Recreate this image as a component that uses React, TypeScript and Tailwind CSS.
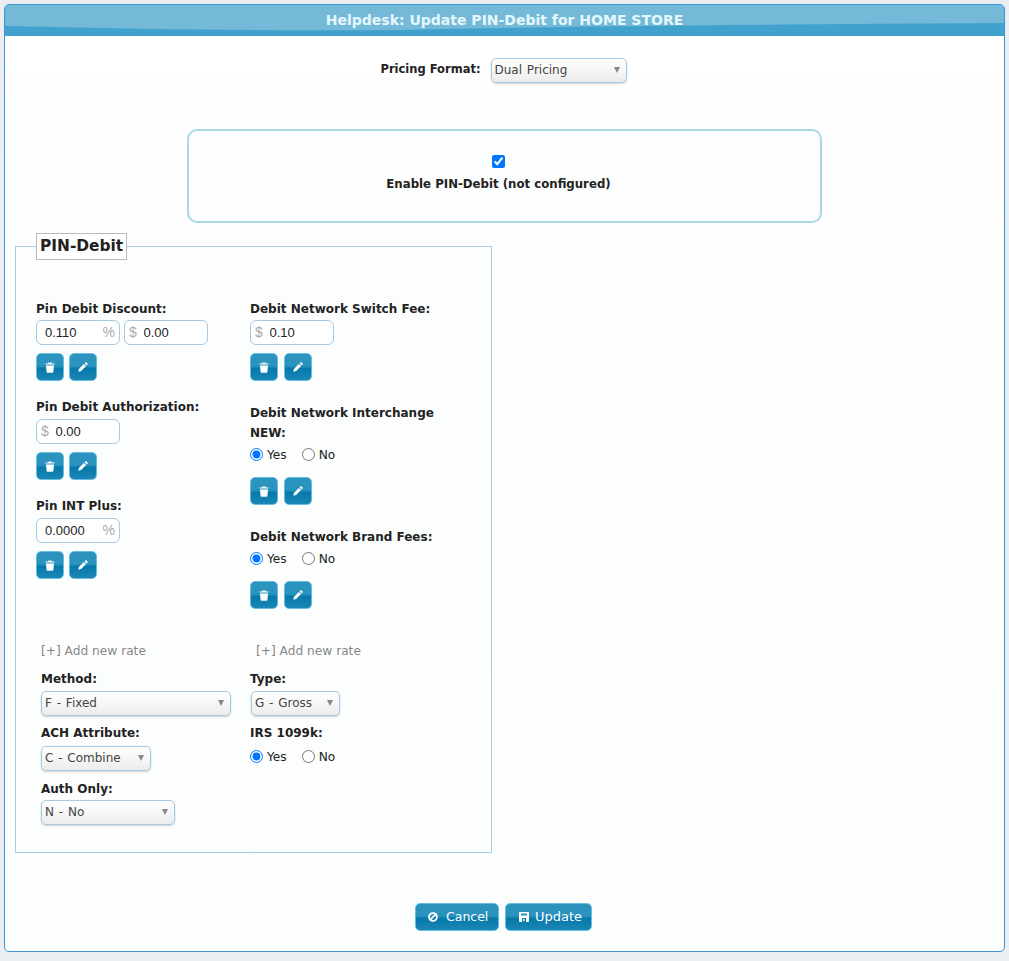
import React from "react";

const btn =
  "flex items-center rounded-[5px] border border-[#62bfe3] bg-[linear-gradient(to_bottom,#2c93be_0%,#2c93be_46%,#0579ab_56%,#1d86b4_100%)] text-white";

function TrashIcon() {
  return (
    <svg width="10" height="11" viewBox="0 0 10 11" fill="white">
      <path d="M3.5 0.5h3l.5 1h2.5v1h-9v-1h2.5z" />
      <path d="M1 3.5h8l-.6 6.4c0 .4-.4.8-.9.8h-5c-.5 0-.9-.4-.9-.8z" />
    </svg>
  );
}
function PencilIcon() {
  return (
    <svg width="10" height="10" viewBox="0 0 10 10" fill="white">
      <path d="M0.3 9.7l.6-2.8 5-5 2.2 2.2-5 5z" />
      <path d="M6.6 1.2l.8-.8c.3-.3.8-.3 1.1 0l1.1 1.1c.3.3.3.8 0 1.1l-.8.8z" />
    </svg>
  );
}
function BanIcon() {
  return (
    <svg width="10" height="10" viewBox="0 0 10 10" fill="none" stroke="white" strokeWidth="1.9">
      <circle cx="5" cy="5" r="3.9" />
      <path d="M2.4 7.6L7.6 2.4" strokeWidth="1.5" />
    </svg>
  );
}
function SaveIcon() {
  return (
    <svg width="10" height="10" viewBox="0 0 10 10" fill="white">
      <path fillRule="evenodd" d="M1 0h8c.6 0 1 .4 1 1v8c0 .6-.4 1-1 1H1c-.6 0-1-.4-1-1V1c0-.6.4-1 1-1zm1 1.5v2h6v-2zM3 6v4h4V6z" />
      <path d="M4 6.8h1.4v2.4H4z" />
    </svg>
  );
}

function ActionButtons({ className = "mt-2 gap-[5px]" }: { className?: string }) {
  return (
    <div className={`flex ${className}`}>
      <button type="button" className={`${btn} h-7 w-7 justify-center`} aria-label="Delete">
        <TrashIcon />
      </button>
      <button type="button" className={`${btn} h-7 w-7 justify-center`} aria-label="Edit">
        <PencilIcon />
      </button>
    </div>
  );
}

function Label({ children, className = "" }: { children: React.ReactNode; className?: string }) {
  return <div className={`text-[12px] leading-5 font-bold text-[#222] ${className}`}>{children}</div>;
}

function Amount({
  value,
  prefix,
  suffix,
}: {
  value: string;
  prefix?: string;
  suffix?: string;
}) {
  return (
    <div className="flex h-[25px] w-[84px] items-center rounded-[6px] border border-[#a3c9e4] bg-white font-['Liberation_Sans',sans-serif] text-[13px] text-[#222]">
      {prefix && <span className="ml-[4px] w-[14px] text-[14px] text-[#aaa]">{prefix}</span>}
      <input
        readOnly
        defaultValue={value}
        className={`min-w-0 flex-1 bg-transparent outline-none ${prefix ? "pl-[0.5px]" : "pl-2"}`}
      />
      {suffix && <span className="mr-[4px] text-[14px] text-[#aaa]">{suffix}</span>}
    </div>
  );
}

function Select({ value, className = "" }: { value: string; className?: string }) {
  return (
    <div className={`relative h-[25px] ${className}`}>
      <select
        defaultValue={value}
        className="h-full w-full appearance-none rounded-[5px] border border-[#a3c9e4] bg-[linear-gradient(to_bottom,#ffffff_0%,#f8f8f8_40%,#ececec_100%)] pl-[3px] text-[12px] text-[#444] [word-spacing:1px] shadow-[0_1px_2px_rgba(0,0,0,0.18)] outline-none"
      >
        <option>{value}</option>
      </select>
      <span className="pointer-events-none absolute top-[10px] right-[7px] h-0 w-0 border-x-[3.5px] border-t-[6px] border-x-transparent border-t-[#888]" />
    </div>
  );
}

function YesNo({ className = "mt-[2px]" }: { className?: string }) {
  return (
    <div className={`flex h-5 items-center text-[12.2px] text-[#222] ${className}`}>
      <label className="flex items-center gap-[4px]">
        <input type="radio" defaultChecked className="m-0" />
        Yes
      </label>
      <label className="ml-[15px] flex items-center gap-[4px]">
        <input type="radio" className="m-0" />
        No
      </label>
    </div>
  );
}

function AddRate() {
  return (
    <div className="text-[12.2px] leading-5 text-[#888]">
      <span className="text-[#8a7f75]">[+]</span> Add new rate
    </div>
  );
}

export default function App() {
  return (
    <div className="min-h-[961px] bg-[#eaeef3] p-[4px] pb-[9px] font-['DejaVu_Sans','Liberation_Sans',sans-serif]">
      <div className="h-[948px] overflow-hidden rounded-[5px] border border-[#3f94d6] bg-[linear-gradient(to_bottom,#ffffff_0%,#fcfdfd_100%)]">
        <div className="relative flex h-[31px] items-center justify-center bg-[#41a3cd]">
          <svg className="absolute inset-0 h-[26px] w-full" viewBox="0 0 1000 26" preserveAspectRatio="none">
            <path d="M0 0H1000V18Q600 20 400 25Q200 26 0 21Z" fill="#75b9d8" />
          </svg>
          <h1 className="relative text-[14px] font-bold text-[#e4f7fc]">Helpdesk: Update PIN-Debit for HOME STORE</h1>
        </div>

        <div className="mt-[21px] flex items-center justify-center pr-[2px]">
          <span className="mr-[10px] text-[11.5px] font-bold text-[#222]">Pricing Format:</span>
          <Select value="Dual Pricing" className="w-[136px]" />
        </div>

        <div className="mt-[47px] ml-[182px] flex h-[94px] w-[635px] flex-col items-center rounded-[10px] border-2 border-[#a9d8e6] bg-[#fcfdfd] pt-[24px] pr-[12px]">
          <input type="checkbox" defaultChecked className="m-0" />
          <div className="mt-[6px] text-[11.75px] leading-5 font-bold text-[#222]">Enable PIN-Debit (not configured)</div>
        </div>

        <fieldset className="mt-[10px] ml-[10px] h-[620px] w-[477px] border border-[#a3cfe4] bg-[#fcfefe] px-[20px]">
          <legend className="border border-[#bbb] bg-white px-[3px] text-[15.4px] leading-[25px] font-bold text-[#222]">
            PIN-Debit
          </legend>
          <div className="mt-[39px] flex">
            <div className="w-[214px]">
              <Label>Pin Debit Discount:</Label>
              <div className="mt-px flex gap-[4px]">
                <Amount value="0.110" suffix="%" />
                <Amount value="0.00" prefix="$" />
              </div>
              <ActionButtons />
              <Label className="mt-4">Pin Debit Authorization:</Label>
              <div className="mt-[2px]">
                <Amount value="0.00" prefix="$" />
              </div>
              <ActionButtons />
              <Label className="mt-4">Pin INT Plus:</Label>
              <div className="mt-[2px]">
                <Amount value="0.0000" suffix="%" />
              </div>
              <ActionButtons />
            </div>
            <div className="w-[220px]">
              <Label>Debit Network Switch Fee:</Label>
              <div className="mt-px">
                <Amount value="0.10" prefix="$" />
              </div>
              <ActionButtons className="mt-2 gap-[6px]" />
              <Label className="mt-[22px]">Debit Network Interchange NEW:</Label>
              <YesNo />
              <ActionButtons className="mt-[12px] gap-[6px]" />
              <Label className="mt-[22px]">Debit Network Brand Fees:</Label>
              <YesNo />
              <ActionButtons className="mt-[12px] gap-[6px]" />
            </div>
          </div>

          <div className="mt-[32px] flex">
            <div className="w-[214px] pl-[5px]">
              <AddRate />
              <Label className="mt-[8px]">Method:</Label>
              <Select value="F - Fixed" className="mt-[1px] w-[190px]" />
              <Label className="mt-[8px]">ACH Attribute:</Label>
              <Select value="C - Combine" className="mt-[2px] w-[110px]" />
              <Label className="mt-[9px]">Auth Only:</Label>
              <Select value="N - No" className="mt-0 w-[134px]" />
            </div>
            <div className="w-[220px]">
              <div className="pl-[6px]">
                <AddRate />
              </div>
              <Label className="mt-[8px]">Type:</Label>
              <Select value="G - Gross" className="mt-[1px] ml-px w-[89px]" />
              <Label className="mt-[8px]">IRS 1099k:</Label>
              <YesNo className="mt-[4px]" />
            </div>
          </div>
        </fieldset>

        <div className="mt-[50px] flex justify-center gap-[6px] pr-[2px]">
          <button type="button" className={`${btn} h-7 w-[84px] gap-[8px] pl-[12px] text-[12.5px]`}>
            <BanIcon />
            Cancel
          </button>
          <button type="button" className={`${btn} h-7 w-[87px] gap-[6px] pl-[13px] text-[13px]`}>
            <SaveIcon />
            Update
          </button>
        </div>
      </div>
    </div>
  );
}
